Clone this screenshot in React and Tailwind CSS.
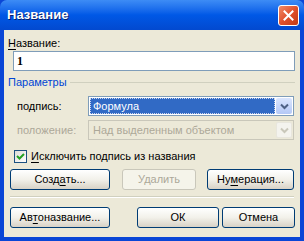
import React from 'react'

const font = { fontFamily: '"Liberation Sans", Arial, sans-serif' }

function U({ children }) {
  return <span className="underline underline-offset-2">{children}</span>
}

function XpButton({ children, className = '', disabled = false }) {
  return (
    <div
      className={
        'flex h-[21px] items-center justify-center rounded-[3px] border text-[11px] ' +
        (disabled
          ? 'border-[#c9c7ba] bg-[#f5f4ea] text-[#aca899] '
          : 'border-[#003c74] bg-gradient-to-b from-[#ffffff] via-[#f2f1ea] to-[#d8d2c6] text-black ') +
        className
      }
    >
      {children}
    </div>
  )
}

function Chevron({ color }) {
  return (
    <svg width="9" height="7" viewBox="0 0 9 7">
      <path d="M1 1.5 L4.5 5 L8 1.5" fill="none" stroke={color} strokeWidth="2" />
    </svg>
  )
}

export default function App() {
  return (
    <div className="flex h-[241px] w-[304px] flex-col bg-[#0a46d6]" style={font}>
      {/* Title bar */}
      <div className="flex h-[30px] items-center justify-between rounded-t-[7px] bg-gradient-to-b from-[#3d8cf5] via-[#0058e6] to-[#0249cf] pl-[7px] pr-[5px]">
        <span className="text-[13px] font-bold text-white [text-shadow:1px_1px_0_#0a1f6b]">Название</span>
        <div className="flex h-[21px] w-[21px] items-center justify-center rounded-[3px] border border-white bg-gradient-to-br from-[#f08a66] via-[#e0502c] to-[#c13a14]">
          <svg width="11" height="11" viewBox="0 0 11 11">
            <path d="M1.5 1.5 L9.5 9.5 M9.5 1.5 L1.5 9.5" stroke="white" strokeWidth="2" strokeLinecap="square" />
          </svg>
        </div>
      </div>

      {/* Body */}
      <div className="mx-[4px] mb-[4px] flex flex-1 flex-col bg-[#ece9d8] text-[11px] leading-[13px] text-black">
        <div className="ml-[4px] mt-[7px]">
          <U>Н</U>азвание:
        </div>
        <div className="ml-[9px] mr-[5px] mt-[1px] flex h-[20px] items-center border border-[#7f9db9] bg-white pl-[3px] text-[12px] font-bold" style={{ fontFamily: '"Liberation Serif", serif' }}>
          1
        </div>

        <div className="mt-[5px] flex items-center">
          <span className="ml-[4px] text-[#0046d5]">Параметры</span>
          <div className="ml-[3px] mr-[5px] h-px flex-1 bg-[#d0d0bf]" />
        </div>

        <div className="mt-[7px] flex items-center">
          <span className="ml-[13px] w-[71px]">
            по<U>д</U>пись:
          </span>
          <div className="mr-[6px] flex h-[20px] flex-1 items-center border border-[#7f9db9] bg-white p-[1px]">
            <div className="flex h-full flex-1 items-center border border-dotted border-[#c9d4ee] bg-[#316ac5] pl-[2px] text-white">
              Формула
            </div>
            <div className="ml-[1px] flex h-full w-[16px] items-center justify-center rounded-[2px] bg-gradient-to-b from-[#dbe6fe] to-[#b4c8f6]">
              <Chevron color="#4d6185" />
            </div>
          </div>
        </div>

        <div className="mt-[4px] flex items-center">
          <span className="ml-[13px] w-[71px] text-[#aca899]">положение:</span>
          <div className="mr-[6px] flex h-[20px] flex-1 items-center border border-[#c9c7ba] bg-[#ece9d8] p-[1px]">
            <div className="flex h-full flex-1 items-center pl-[3px] text-[#aca899]">Над выделенным объектом</div>
            <div className="ml-[1px] flex h-full w-[16px] items-center justify-center rounded-[2px] border border-[#e8e6dd] bg-[#f4f3ee]">
              <Chevron color="#c9c7ba" />
            </div>
          </div>
        </div>

        <div className="mt-[10px] flex items-center">
          <div className="ml-[10px] flex h-[13px] w-[13px] items-center justify-center border border-[#1c5180] bg-gradient-to-br from-[#dcdcd7] to-[#ffffff]">
            <svg width="9" height="9" viewBox="0 0 9 9">
              <path d="M1 4 L3.5 6.5 L8 2" fill="none" stroke="#21a121" strokeWidth="2" />
            </svg>
          </div>
          <span className="ml-[4px]">
            <U>И</U>сключить подпись из названия
          </span>
        </div>

        <div className="mt-[6px] flex items-center">
          <XpButton className="ml-[6px] w-[100px]">
            Созд<U>а</U>ть...
          </XpButton>
          <XpButton disabled className="ml-[12px] w-[74px]">
            Удалить
          </XpButton>
          <XpButton className="ml-[11px] w-[87px]">
            Ну<U>м</U>ерация...
          </XpButton>
        </div>

        <div className="ml-[6px] mr-[6px] mt-[6px] h-[2px] border-t border-[#d0d0bf] border-b-white" style={{ borderBottomWidth: 1, borderBottomStyle: 'solid' }} />

        <div className="mt-[9px] flex items-center">
          <XpButton className="ml-[6px] w-[100px]">
            Ав<U>т</U>оназвание...
          </XpButton>
          <XpButton className="ml-[27px] w-[82px]">ОК</XpButton>
          <XpButton className="ml-[3px] w-[73px]">Отмена</XpButton>
        </div>
      </div>
    </div>
  )
}
